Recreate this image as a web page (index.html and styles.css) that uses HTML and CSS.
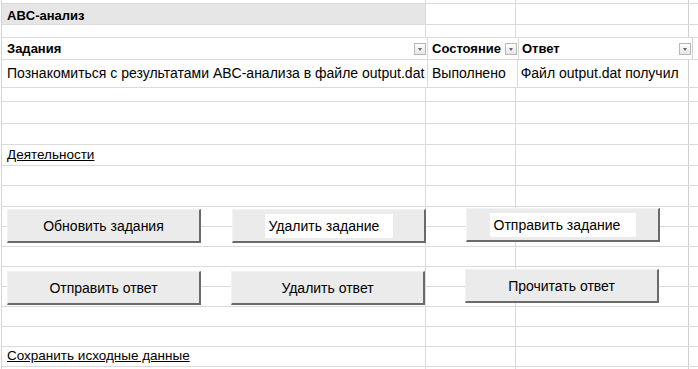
FILE: index.html
```html
<!DOCTYPE html>
<html lang="ru">
<head>
    <meta charset="UTF-8">
    <title>ABC-анализ</title>
    <link rel="stylesheet" href="styles.css">
</head>
<body>
    <div class="sheet">
        <div class="row h4"><div class="cell ca"></div><div class="cell cb"></div><div class="cell cc"></div><div class="cell cd"></div></div>
        <div class="row h21"><div class="cell ca title">ABC-анализ</div><div class="cell cb"></div><div class="cell cc"></div><div class="cell cd"></div></div>
        <div class="row h13"><div class="cell ca"></div><div class="cell cb"></div><div class="cell cc"></div><div class="cell cd"></div></div>
        <div class="row h22 head">
            <div class="cell ca"><span>Задания</span><span class="drop"></span></div>
            <div class="cell cb"><span>Состояние</span><span class="drop"></span></div>
            <div class="cell cc"><span>Ответ</span><span class="drop"></span></div>
            <div class="cell cd"></div>
        </div>
        <div class="row h28 data">
            <div class="cell ca">Познакомиться с результатами ABC-анализа в файле output.dat</div>
            <div class="cell cb">Выполнено</div>
            <div class="cell cc">Файл output.dat получил</div>
            <div class="cell cd"></div>
        </div>
        <div class="row h14"><div class="cell ca"></div><div class="cell cb"></div><div class="cell cc"></div><div class="cell cd"></div></div>
        <div class="row h22"><div class="cell ca"></div><div class="cell cb"></div><div class="cell cc"></div><div class="cell cd"></div></div>
        <div class="row h21"><div class="cell ca"></div><div class="cell cb"></div><div class="cell cc"></div><div class="cell cd"></div></div>
        <div class="row h21"><div class="cell ca link">Деятельности</div><div class="cell cb"></div><div class="cell cc"></div><div class="cell cd"></div></div>
        <div class="row h20"><div class="cell ca"></div><div class="cell cb"></div><div class="cell cc"></div><div class="cell cd"></div></div>
        <div class="row h21"><div class="cell ca"></div><div class="cell cb"></div><div class="cell cc"></div><div class="cell cd"></div></div>
        <div class="row h20"><div class="cell ca"></div><div class="cell cb"></div><div class="cell cc"></div><div class="cell cd"></div></div>
        <div class="row h20"><div class="cell ca"></div><div class="cell cb"></div><div class="cell cc"></div><div class="cell cd"></div></div>
        <div class="row h20"><div class="cell ca"></div><div class="cell cb"></div><div class="cell cc"></div><div class="cell cd"></div></div>
        <div class="row h20"><div class="cell ca"></div><div class="cell cb"></div><div class="cell cc"></div><div class="cell cd"></div></div>
        <div class="row h20"><div class="cell ca"></div><div class="cell cb"></div><div class="cell cc"></div><div class="cell cd"></div></div>
        <div class="row h20"><div class="cell ca"></div><div class="cell cb"></div><div class="cell cc"></div><div class="cell cd"></div></div>
        <div class="row h20"><div class="cell ca"></div><div class="cell cb"></div><div class="cell cc"></div><div class="cell cd"></div></div>
        <div class="row h20"><div class="cell ca link">Сохранить исходные данные</div><div class="cell cb"></div><div class="cell cc"></div><div class="cell cd"></div></div>
        <div class="row h20"><div class="cell ca"></div><div class="cell cb"></div><div class="cell cc"></div><div class="cell cd"></div></div>

        <!-- кнопки лежат поверх ячеек, как фигуры на листе -->
        <button class="btn b1">Обновить задания</button>
        <button class="btn b2"><span class="lbl">Удалить задание</span></button>
        <button class="btn b3"><span class="lbl">Отправить задание</span></button>
        <button class="btn b4">Отправить ответ</button>
        <button class="btn b5">Удалить ответ</button>
        <button class="btn b6">Прочитать ответ</button>
    </div>
</body>
</html>
```

FILE: styles.css
```css
/* страница */
body {
    margin: 0;
    background-color: #fff;
    font-family: 'Liberation Sans', Arial, sans-serif;
    font-size: 13.5px;
    color: #000;
    overflow: hidden;
}

/* лист с сеткой */
.sheet {
    position: relative;
    margin-left: 1px;
    border-left: 1px solid #d4d4d4;
}

.row {
    display: flex;
    box-sizing: border-box;
    border-bottom: 1px solid #dadada;
}

.h4  { height: 4px; }
.h13 { height: 13px; }
.h14 { height: 14px; }
.h20 { height: 20px; }
.h21 { height: 21px; }
.h22 { height: 22px; }
.h28 { height: 28px; }

.cell {
    box-sizing: border-box;
    display: flex;
    align-items: flex-end;
    padding: 0 4px 3px 5px;
    border-right: 1px solid #dadada;
    white-space: nowrap;
    overflow: visible;
}

.ca { width: 426px; }
.cb { width: 91px; padding-left: 4px; }
.cc { width: 174px; padding-left: 3px; border-right-color: #d0d0d0; }
.cd { flex: 1; border-right: none; }

/* заголовок листа */
.title {
    background-color: #e6e6e6;
    font-weight: bold;
    font-size: 13px;
    align-items: center;
    padding-top: 2px;
    padding-bottom: 0;
}

/* шапка таблицы */
.head .cell {
    justify-content: space-between;
    font-weight: bold;
    font-size: 13px;
    padding-bottom: 3px;
    padding-right: 1px;
}

.head .cd { padding: 0; }

.drop {
    position: relative;
    box-sizing: border-box;
    width: 12px;
    height: 12px;
    margin-bottom: 1px;
    border: 1px solid #b8b8b8;
    background: linear-gradient(#ffffff, #e6e6e6);
}

.drop::after {
    content: "";
    position: absolute;
    left: 3px;
    top: 4px;
    border-left: 2.5px solid transparent;
    border-right: 2.5px solid transparent;
    border-top: 3px solid #666;
}

/* строка с данными */
.data .cell {
    align-items: center;
    font-size: 14px;
    padding-bottom: 2px;
}

/* ссылки */
.link {
    text-decoration: underline;
}

/* кнопки листа */
.btn {
    position: absolute;
    box-sizing: border-box;
    display: flex;
    align-items: center;
    justify-content: center;
    width: 194px;
    height: 34px;
    padding: 0;
    background-color: #ebebeb;
    border-top: 1px solid #f2f2f2;
    border-left: 1px solid #f2f2f2;
    border-right: 2px solid #6a6a6a;
    border-bottom: 2px solid #6a6a6a;
    font-family: 'Liberation Sans', Arial, sans-serif;
    font-size: 14px;
    color: #000;
}

.lbl {
    box-sizing: border-box;
    background-color: #fff;
    padding: 4px 0 4px 4px;
    text-align: left;
}

.b2 .lbl { width: 128px; }
.b3 .lbl { width: 146px; }

.b1 { left: 5px;   top: 209px; }
.b2 { left: 230px; top: 209px; }
.b3 { left: 464px; top: 208px; }
.b4 { left: 5px;   top: 271px; }
.b5 { left: 229px; top: 271px; }
.b6 { left: 463px; top: 269px; }
```
